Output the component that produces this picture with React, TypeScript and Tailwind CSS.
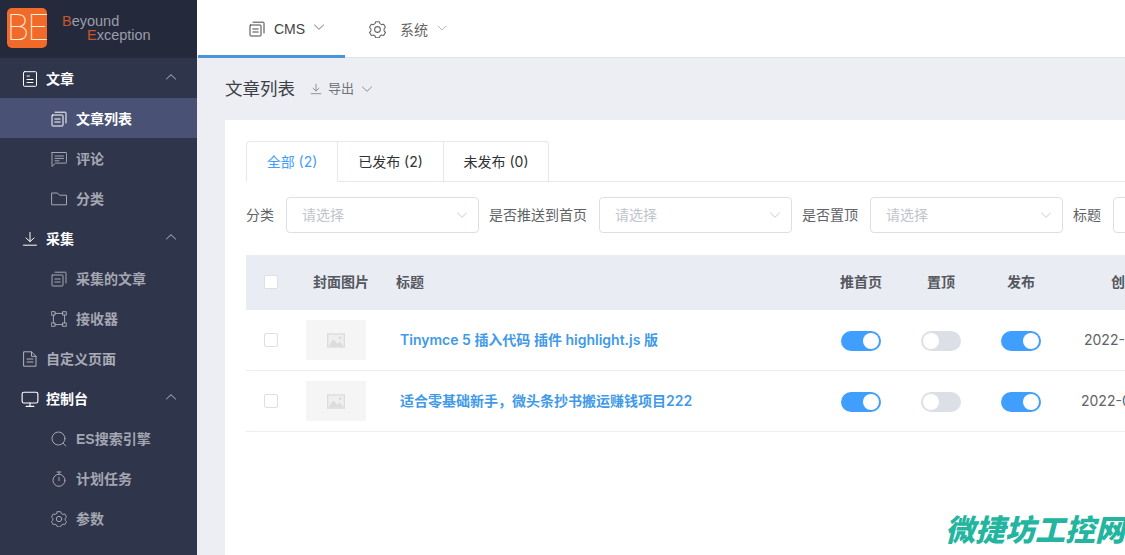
import React from "react";

type IP = { className?: string };
const S = ({ className, children, vb = "0 0 16 16" }: IP & { children: React.ReactNode; vb?: string }) => (
  <svg viewBox={vb} fill="none" stroke="currentColor" strokeWidth="1" strokeLinecap="round" strokeLinejoin="round" className={className}>{children}</svg>
);
const DocIcon = ({ className }: IP) => (
  <S className={className}><rect x="1.500" y="0.700" width="13" height="14.600" rx="1" /><path d="M5 5h2.500M5 8.500h6M5 11.500h6" /></S>
);
const ListDocIcon = ({ className }: IP) => (
  <S className={className}><rect x="1" y="4" width="11" height="11" rx="0.6" /><path d="M4 1.200h10.400a.6.6 0 0 1 .6.6V12" /><path d="M3.800 8h5.400M3.800 11h5.400" /></S>
);
const CommentIcon = ({ className }: IP) => (
  <S className={className}><path d="M1 1.500h14a.6.6 0 0 1 .6.6v9.400a.6.6 0 0 1-.6.6H4.500L1 15.500V2z" /><path d="M4 5h8.500M4 7.400h8.500M4 9.800h4" /></S>
);
const FolderIcon = ({ className }: IP) => (
  <S className={className}><path d="M1 2h5.500l2 2.200h7v9.600H1z" /></S>
);
const DownIcon = ({ className }: IP) => (
  <S className={className}><path d="M8 1.500v9M4 7l4 3.600L12 7M1.500 14.200h13" /></S>
);
const NodesIcon = ({ className }: IP) => (
  <S className={className}>
    <rect x="0.700" y="0.700" width="3.400" height="3.400" /><rect x="11.900" y="0.700" width="3.400" height="3.400" /><rect x="0.700" y="11.900" width="3.400" height="3.400" /><rect x="11.900" y="11.900" width="3.400" height="3.400" />
    <path d="M4.100 2.400h7.800M4.100 13.600h7.800M2.400 4.100v7.800M13.600 4.100v7.800" />
  </S>
);
const PageIcon = ({ className }: IP) => (
  <S className={className}><path d="M2 0.800h7.500l4.500 4.500v9.900H2z" /><path d="M9.500 0.800v4.500H14M5 8h6M5 11h6" /></S>
);
const MonitorIcon = ({ className }: IP) => (
  <S className={className}><rect x="1" y="2" width="14" height="9.500" rx="1.600" /><path d="M8 11.500V14.500M4.500 14.500h7" /></S>
);
const SearchIcon = ({ className }: IP) => (
  <S className={className}><circle cx="7.500" cy="7.500" r="6.500" /><path d="M12.200 12.200l2.500 2.800" /></S>
);
const TimerIcon = ({ className }: IP) => (
  <S className={className}><circle cx="8" cy="9.300" r="6" /><path d="M6 1h4M8 1v2.300M8 6.500v3.200" /></S>
);
const GearIcon = ({ className }: IP) => (
  <S className={className}>
    <path d="M6.300 1.300h3.400l.6 1.800 1.600.9 1.900-.4 1.700 2.900-1.300 1.500 0 1.900 1.300 1.400-1.700 2.900-1.900-.4-1.600.9-.6 1.800H6.300l-.6-1.800-1.600-.9-1.900.4L.5 11.300l1.300-1.400 0-1.900L.5 6.500l1.700-2.900 1.900.4 1.600-.9z" transform="translate(0 -0.600)" />
    <circle cx="8" cy="8" r="2.700" />
  </S>
);
const Chevron = ({ up, className }: IP & { up?: boolean }) => (
  <svg viewBox="0 0 12 8" fill="none" stroke="currentColor" strokeWidth="1" strokeLinecap="round" strokeLinejoin="round" className={className}>
    <path d={up ? "M1.500 6L6 1.700 10.500 6" : "M1.500 2L6 6.300 10.500 2"} />
  </svg>
);
const ImageGlyph = () => (
  <svg viewBox="0 0 20 16" className="w-[18px] h-[15px]">
    <rect width="20" height="16" fill="#dcdcdc" />
    <rect x="1.500" y="1.500" width="17" height="13" fill="#efefef" />
    <circle cx="14.500" cy="5" r="1.700" fill="#dcdcdc" />
    <path d="M1.500 14.500L7 6.500l4.500 5 2.500-2.500 4.500 5.500z" fill="#dcdcdc" />
  </svg>
);

const Top = ({ icon: I, label, mt }: { icon: React.FC<IP>; label: string; mt?: boolean }) => (
  <div className="h-10 flex items-center pl-[22px] pt-[2px] text-white font-semibold">
    <I className={mt ? "w-[18px] h-[18px] -ml-[1px] mr-[7px]" : "w-4 h-4 mr-2"} />
    <span>{label}</span>
    <Chevron up className="w-3 h-2 ml-auto mr-[20px] mb-1 text-[#b8bcc8]" />
  </div>
);
const Plain = ({ icon: I, label }: { icon: React.FC<IP>; label: string }) => (
  <div className="h-10 flex items-center pl-[22px] pt-[2px] text-[#a9acb6] font-semibold">
    <I className="w-4 h-4 mr-2 text-[#b0b3bd]" />
    <span>{label}</span>
  </div>
);
const Sub = ({ icon: I, label, active }: { icon: React.FC<IP>; label: string; active?: boolean }) => (
  <div className={`h-10 flex items-center pl-[51px] pt-[2px] font-semibold ${active ? "bg-[#495274] text-white" : "text-[#a4a7b2]"}`}>
    <I className={`w-4 h-4 mr-[9px] ${active ? "text-white" : "text-[#a4a7b2]"}`} />
    <span>{label}</span>
  </div>
);

const Select = () => (
  <div className="w-[193px] h-9 shrink-0 border border-[#dcdfe6] rounded flex items-center pl-[15px] pr-[10px] text-[#c0c4cc]">
    <span>请选择</span>
    <Chevron className="w-3 h-2 ml-auto text-[#c8ccd4]" />
  </div>
);

const Switch = ({ on }: { on?: boolean }) => (
  <div className={`w-10 h-5 mt-[2px] rounded-full flex items-center px-[2px] ${on ? "bg-[#409eff] justify-end" : "bg-[#dcdfe6] justify-start"}`}>
    <div className="w-4 h-4 rounded-full bg-white" />
  </div>
);

const Cb = () => <div className="w-[14px] h-[14px] border border-[#dcdfe6] rounded-[2px] bg-white" />;

const Row = ({ title, date, datePad }: { title: string; date: string; datePad: string }) => (
  <div className="h-[61px] flex items-center border-b border-[#ebeef5]">
    <div className="w-[50px] flex justify-center shrink-0"><Cb /></div>
    <div className="w-[100px] shrink-0 pl-[10px]">
      <div className="w-[60px] h-10 bg-[#f5f5f5] flex items-center justify-center"><ImageGlyph /></div>
    </div>
    <div className="w-[425px] shrink-0 pl-[4px] text-[#409ae8] font-semibold whitespace-nowrap font-['Inter','Noto_Sans_CJK_SC',sans-serif]">{title}</div>
    <div className="w-[80px] shrink-0 flex justify-center"><Switch on /></div>
    <div className="w-[80px] shrink-0 flex justify-center"><Switch /></div>
    <div className="w-[80px] shrink-0 flex justify-center"><Switch on /></div>
    <div className={`shrink-0 whitespace-nowrap text-[#606266] font-['Inter',sans-serif] ${datePad}`}>{date}</div>
  </div>
);

export default function App() {
  return (
    <div className="relative w-[1125px] h-[555px] overflow-hidden flex bg-[#eceef3] text-sm text-[#606266] font-['Liberation_Sans','Noto_Sans_CJK_SC',sans-serif]">
      <aside className="w-[197px] shrink-0 bg-[#2f354b] flex flex-col">
        <div className="h-[58px] bg-[#242a3c] flex items-start pl-[7px] pt-2">
          <div className="w-10 h-10 rounded-[5px] bg-[#f26a2a] flex items-center justify-center text-[#fff3d8]">
            <span className="text-[36px] leading-none font-['Roboto',sans-serif] font-thin tracking-[-1px]">BE</span>
          </div>
          <div className="ml-[15px] mt-[6px] text-[14.500px] leading-[14px] text-[#9a9da8]">
            <div><span className="text-[#c8552a]">B</span>eyound</div>
            <div className="ml-[25px]"><span className="text-[#c8552a]">E</span>xception</div>
          </div>
        </div>
        <Top icon={DocIcon} label="文章" />
        <Sub icon={ListDocIcon} label="文章列表" active />
        <Sub icon={CommentIcon} label="评论" />
        <Sub icon={FolderIcon} label="分类" />
        <Top icon={DownIcon} label="采集" />
        <Sub icon={ListDocIcon} label="采集的文章" />
        <Sub icon={NodesIcon} label="接收器" />
        <Plain icon={PageIcon} label="自定义页面" />
        <Top icon={MonitorIcon} label="控制台" mt />
        <Sub icon={SearchIcon} label="ES搜索引擎" />
        <Sub icon={TimerIcon} label="计划任务" />
        <Sub icon={GearIcon} label="参数" />
      </aside>

      <main className="flex-1 min-w-0 flex flex-col">
        <header className="h-[58px] shrink-0 bg-white border-b border-[#dfe2e8] flex items-stretch pl-px">
          <div className="w-[147px] h-[58px] border-b-[3px] border-[#4a94d8] flex items-center pl-[51px] pt-[3px] text-[#444]">
            <ListDocIcon className="w-4 h-4 mr-[9px]" />
            <span>CMS</span>
            <Chevron className="w-3 h-2 ml-2 mb-1 text-[#777]" />
          </div>
          <div className="flex items-center pl-6 pt-[2px] text-[#666]">
            <GearIcon className="w-[17px] h-[17px] mr-[14px]" />
            <span>系统</span>
            <Chevron className="w-[10px] h-2 ml-[9px] mb-1 text-[#aaa]" />
          </div>
        </header>

        <div className="h-[62px] shrink-0 flex items-center pl-7">
          <h1 className="text-[17.500px] text-[#3c3f45] font-normal mr-[15px]">文章列表</h1>
          <DownIcon className="w-3 h-3 mr-[6px] text-[#777]" />
          <span className="text-[13px] text-[#707378]">导出</span>
          <Chevron className="w-3 h-2 ml-[7px] text-[#8a8d92]" />
        </div>

        <section className="flex-1 ml-7 bg-white pt-[21px] overflow-hidden">
          <div className="flex h-[41px] border-b border-[#e4e7ed] ml-[21px] w-[900px] font-['Inter','Noto_Sans_CJK_SC',sans-serif]">
            <div className="w-[92px] h-[41px] border border-[#e4e7ed] border-b-white rounded-tl flex items-center justify-center text-[#409eff]">全部 (2)</div>
            <div className="w-[106px] h-10 border-t border-r border-[#e4e7ed] flex items-center justify-center text-[#303133]">已发布 (2)</div>
            <div className="w-[105px] h-10 border-t border-r border-[#e4e7ed] rounded-tr flex items-center justify-center text-[#303133]">未发布 (0)</div>
          </div>

          <div className="flex items-center h-9 mt-[15px] ml-[21px]">
            <span className="mr-3 whitespace-nowrap">分类</span>
            <Select />
            <span className="ml-[10px] mr-3 whitespace-nowrap">是否推送到首页</span>
            <Select />
            <span className="ml-[10px] mr-3 whitespace-nowrap">是否置顶</span>
            <Select />
            <span className="ml-[10px] mr-3 whitespace-nowrap">标题</span>
            <Select />
          </div>

          <div className="mt-[22px] ml-[21px] w-[1100px]">
            <div className="h-[55px] pb-[2px] bg-[#e9ecf3] flex items-center font-semibold text-[#55585e]">
              <div className="w-[50px] flex justify-center shrink-0"><Cb /></div>
              <div className="w-[100px] shrink-0 pl-[17px]">封面图片</div>
              <div className="w-[425px] shrink-0">标题</div>
              <div className="w-[80px] shrink-0 text-center">推首页</div>
              <div className="w-[80px] shrink-0 text-center">置顶</div>
              <div className="w-[80px] shrink-0 text-center">发布</div>
              <div className="shrink-0 pl-[50px] whitespace-nowrap">创建时间</div>
            </div>
            <Row title="Tinymce 5 插入代码 插件 highlight.js 版" date="2022-03-08 13:14" datePad="pl-[23px]" />
            <Row title="适合零基础新手，微头条抄书搬运赚钱项目222" date="2022-02-24 11:48" datePad="pl-[20px]" />
          </div>
        </section>
      </main>

      <div className="absolute right-0 top-[513px] w-[180px] text-[30px] leading-9 font-black text-[#23b5a0] whitespace-nowrap italic">微捷坊工控网</div>
    </div>
  );
}
